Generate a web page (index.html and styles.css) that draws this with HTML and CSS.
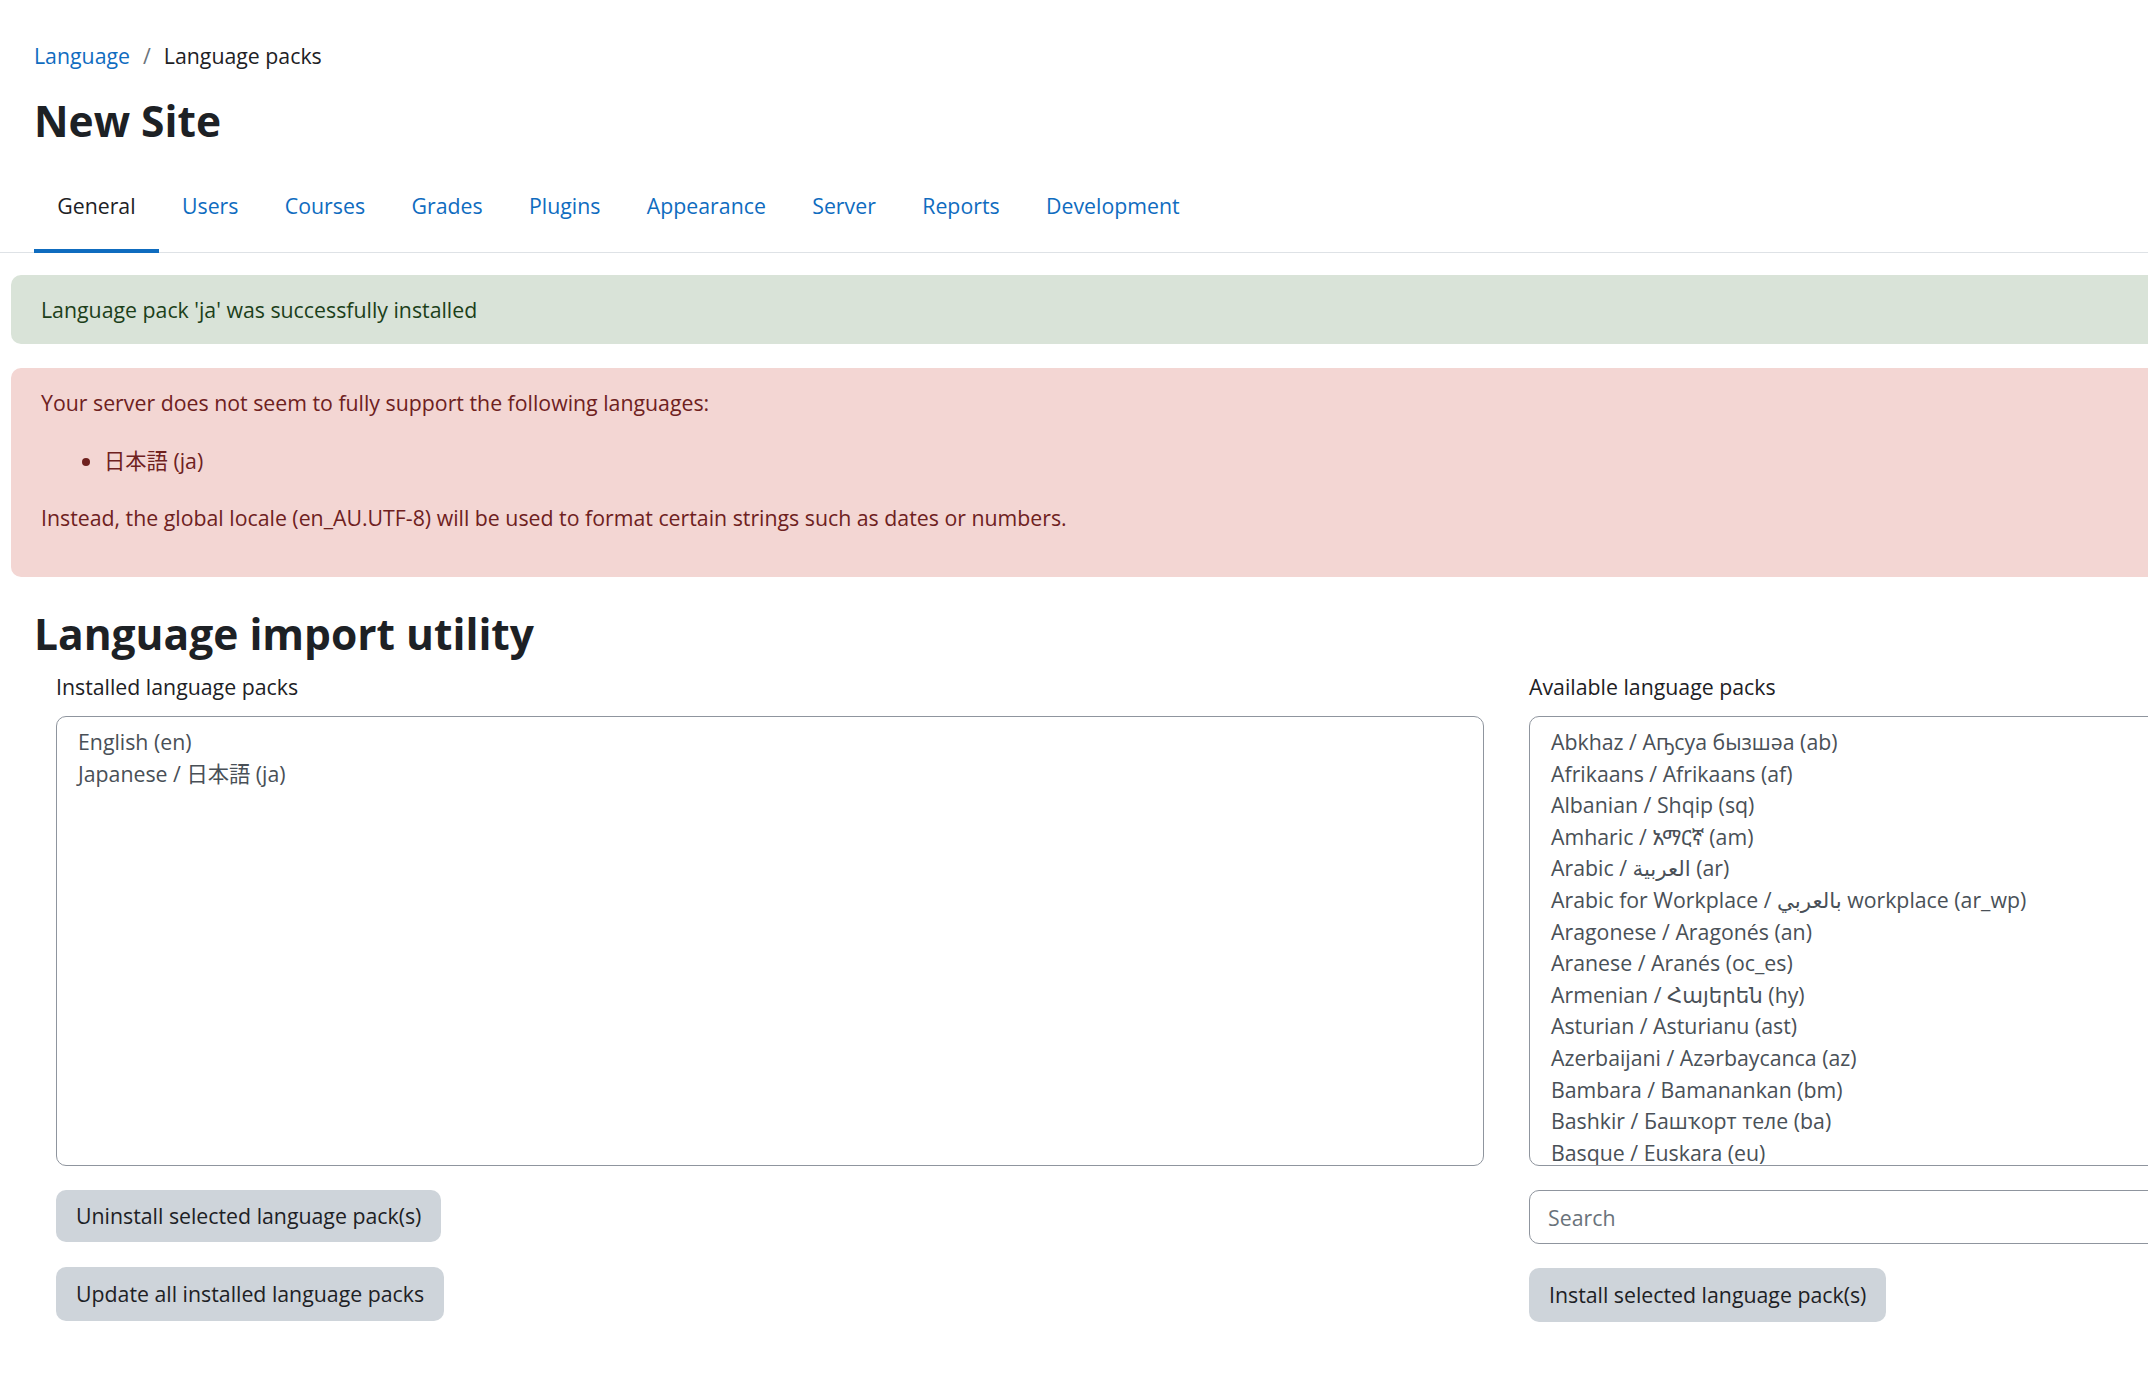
FILE: index.html
```html
<!DOCTYPE html>
<html lang="en">
<head>
<meta charset="utf-8">
<title>Language packs</title>
<link rel="stylesheet" href="styles.css">
</head>
<body>
<div class="page">
  <header class="page-header">
    <nav class="breadcrumb">
      <a href="#" class="crumb-link">Language</a><span class="crumb-sep">/</span><span class="crumb-current">Language packs</span>
    </nav>
    <h1 class="site-title">New Site</h1>
  </header>

  <nav class="secondary-nav">
    <ul class="tabs">
      <li><a href="#" class="tab active">General</a></li>
      <li><a href="#" class="tab">Users</a></li>
      <li><a href="#" class="tab">Courses</a></li>
      <li><a href="#" class="tab">Grades</a></li>
      <li><a href="#" class="tab">Plugins</a></li>
      <li><a href="#" class="tab">Appearance</a></li>
      <li><a href="#" class="tab">Server</a></li>
      <li><a href="#" class="tab">Reports</a></li>
      <li><a href="#" class="tab">Development</a></li>
    </ul>
  </nav>

  <main class="main">
    <div class="alert alert-success">Language pack 'ja' was successfully installed</div>
    <div class="alert alert-danger">
      <p class="alert-p">Your server does not seem to fully support the following languages:</p>
      <ul class="alert-list"><li>日本語 (ja)</li></ul>
      <p class="alert-p last">Instead, the global locale (en_AU.UTF-8) will be used to format certain strings such as dates or numbers.</p>
    </div>

    <h2 class="section-title">Language import utility</h2>

    <form class="packs">
      <div class="pack-col">
        <label class="pack-label">Installed language packs</label>
        <div class="listbox" role="listbox">
          <div class="opt">English (en)</div>
          <div class="opt">Japanese / 日本語 (ja)</div>
        </div>
        <button type="button" class="btn btn-first">Uninstall selected language pack(s)</button>
        <button type="button" class="btn btn-second">Update all installed language packs</button>
      </div>
      <div class="pack-col">
        <label class="pack-label">Available language packs</label>
        <div class="listbox" role="listbox">
          <div class="opt">Abkhaz / Аҧсуа бызшәа (ab)</div>
          <div class="opt">Afrikaans / Afrikaans (af)</div>
          <div class="opt">Albanian / Shqip (sq)</div>
          <div class="opt">Amharic / አማርኛ (am)</div>
          <div class="opt">Arabic / العربية (ar)</div>
          <div class="opt">Arabic for Workplace / بالعربي workplace (ar_wp)</div>
          <div class="opt">Aragonese / Aragonés (an)</div>
          <div class="opt">Aranese / Aranés (oc_es)</div>
          <div class="opt">Armenian / Հայերեն (hy)</div>
          <div class="opt">Asturian / Asturianu (ast)</div>
          <div class="opt">Azerbaijani / Azərbaycanca (az)</div>
          <div class="opt">Bambara / Bamanankan (bm)</div>
          <div class="opt">Bashkir / Башҡорт теле (ba)</div>
          <div class="opt">Basque / Euskara (eu)</div>
        </div>
        <input type="text" class="search" placeholder="Search">
        <button type="button" class="btn btn-install">Install selected language pack(s)</button>
      </div>
    </form>
  </main>
</div>
</body>
</html>
```

FILE: styles.css
```css
html, body {
  margin: 0;
  padding: 0;
  overflow: hidden;
  background: #fff;
}

body {
  font-family: "Open Sans", "Noto Sans", "DejaVu Sans", "Noto Sans Ethiopic", "Noto Sans CJK JP", sans-serif;
  font-size: 21.3px;
  line-height: 30px;
  color: #1d2125;
}

.page {
  width: 3000px;
}

.page-header {
  padding: 41px 0 0 34px;
}

.breadcrumb {
  display: flex;
  align-items: center;
  height: 30px;
  margin-bottom: 22px;
}

.crumb-link {
  color: #0f6cbf;
  text-decoration: none;
}

.crumb-sep {
  color: #6a737b;
  padding: 0 13px;
}

.crumb-current {
  color: #1d2125;
}

.site-title {
  margin: 0;
  font-size: 42.5px;
  line-height: 56px;
  font-weight: 700;
  color: #1d2125;
}

.secondary-nav {
  border-bottom: 1px solid #dee2e6;
}

.tabs {
  list-style: none;
  margin: 0;
  padding: 0 0 0 34px;
  display: flex;
}

.tab {
  display: block;
  padding: 42px 23.2px 28px;
  border-bottom: 4px solid transparent;
  margin-bottom: -1px;
  color: #0f6cbf;
  text-decoration: none;
  line-height: 30px;
}

.tab.active {
  color: #1d2125;
  border-bottom-color: #0f6cbf;
}

.main {
  padding-top: 22px;
}

.alert {
  margin-left: 11px;
  border-radius: 10px 0 0 10px;
  padding: 20px 30px 19px;
}

.alert-success {
  background: #d9e3d8;
  color: #1c3f1a;
  margin-bottom: 24px;
}

.alert-danger {
  background: #f3d6d3;
  color: #6e211e;
  padding-bottom: 17px;
}

.alert-p {
  margin: 0 0 28px;
}

.alert-p.last {
  margin-bottom: 27px;
}

.alert-list {
  margin: 0 0 27px;
  padding-left: 63px;
}

.section-title {
  margin: 33px 0 0 34px;
  font-size: 42.5px;
  line-height: 48px;
  font-weight: 700;
  color: #1d2125;
}

.packs {
  display: grid;
  grid-template-columns: 1428px 1428px;
  column-gap: 45px;
  padding-left: 56px;
  margin-top: 14px;
}

.pack-col {
  display: flex;
  flex-direction: column;
  align-items: flex-start;
}

.pack-label {
  display: block;
  line-height: 30px;
  margin-bottom: 14px;
  color: #1d2125;
}

.listbox {
  box-sizing: border-box;
  width: 100%;
  height: 450px;
  border: 1px solid #8f959e;
  border-radius: 10px;
  padding: 9px 21px 0;
  overflow: hidden;
  color: #495057;
}

.opt {
  line-height: 31.6px;
  white-space: nowrap;
}

.btn {
  font-family: inherit;
  font-size: 21.3px;
  line-height: 30px;
  color: #1d2125;
  background: #ced4da;
  border: 0;
  border-radius: 10px;
  padding: 0 20px;
  height: 52px;
}

.btn-first {
  margin-top: 24px;
}

.btn-second {
  margin-top: 25px;
  height: 54px;
}

.btn-install {
  margin-top: 24px;
  height: 54px;
}

.search {
  box-sizing: border-box;
  width: 100%;
  height: 54px;
  margin-top: 24px;
  border: 1px solid #8f959e;
  border-radius: 10px;
  padding: 0 18px;
  font-family: inherit;
  font-size: 21.3px;
  color: #495057;
  background: #fff;
}

.search::placeholder {
  color: #6a737b;
}
```
